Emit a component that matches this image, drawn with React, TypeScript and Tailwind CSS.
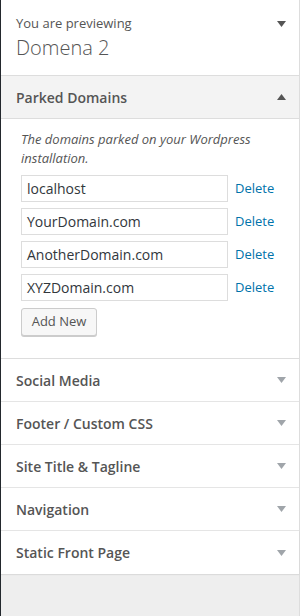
import React from "react";

const Down = ({ color }: { color: string }) => (
  <svg width="9" height="6" viewBox="0 0 9 6" className="block">
    <polygon points="0,0 9,0 4.5,6" fill={color} />
  </svg>
);
const Up = ({ color }: { color: string }) => (
  <svg width="9" height="6" viewBox="0 0 9 6" className="block">
    <polygon points="0,6 9,6 4.5,0" fill={color} />
  </svg>
);

const domains = ["localhost", "YourDomain.com", "AnotherDomain.com", "XYZDomain.com"];
const sections = ["Social Media", "Footer / Custom CSS", "Site Title & Tagline", "Navigation", "Static Front Page"];

export default function App() {
  return (
    <div
      className="flex w-[302px] h-[616px] bg-white overflow-hidden"
      style={{ fontFamily: '"Open Sans", "Noto Sans", sans-serif' }}
    >
      <div className="w-px bg-[#23282d] shrink-0" />
      <div className="w-[299px] shrink-0 bg-[#eeeeee] border-r border-[#dddddd] flex flex-col">
        <div className="bg-white border-b border-[#dddddd] h-[76px] pl-[15px] pr-[13px] pt-[14px] flex justify-between">
          <div>
            <div className="text-[13px] leading-[19px] text-[#555555]">You are previewing</div>
            <div className="text-[20px] leading-[30px] text-[#555555] font-light">Domena 2</div>
          </div>
          <div className="pt-[7px]">
            <Down color="#555555" />
          </div>
        </div>
        <div className="bg-[#f3f3f3] border-b border-[#dddddd] h-[43px] pl-[15px] pr-[13px] flex items-center justify-between">
          <span className="text-[14px] font-semibold text-[#555555]">Parked Domains</span>
          <Up color="#555555" />
        </div>
        <div className="bg-white border-b border-[#dddddd] pl-[20px] pt-[11px] pb-[22px]">
          <p className="text-[13px] leading-[19px] italic text-[#555555] mb-[7px] pr-4">
            The domains parked on your Wordpress installation.
          </p>
          <div className="flex flex-col gap-[6px]">
            {domains.map((d) => (
              <div key={d} className="flex items-center">
                <div className="w-[207px] h-[27px] border border-[#dddddd] px-[5px] flex items-center text-[14px] text-[#32373c]">
                  {d}
                </div>
                <span className="ml-[7px] text-[13px] text-[#0073aa]">Delete</span>
              </div>
            ))}
          </div>
          <button className="mt-[7px] h-[28px] w-[76px] border border-[#cccccc] rounded-[3px] bg-[#f7f7f7] text-[13px] text-[#555555] shadow-[0_1px_0_#cccccc]">
            Add New
          </button>
        </div>
        {sections.map((s, i) => (
          <div
            key={s}
            className={`bg-white h-[43px] pl-[15px] pr-[13px] flex items-center justify-between ${
              i === sections.length - 1 ? "shadow-[0_1px_1px_rgba(0,0,0,0.08)]" : "border-b border-[#e5e5e5]"
            }`}
          >
            <span className="text-[14px] font-semibold text-[#555555]">{s}</span>
            <Down color="#a0a5aa" />
          </div>
        ))}
      </div>
      <div className="flex-1 bg-white" />
    </div>
  );
}
